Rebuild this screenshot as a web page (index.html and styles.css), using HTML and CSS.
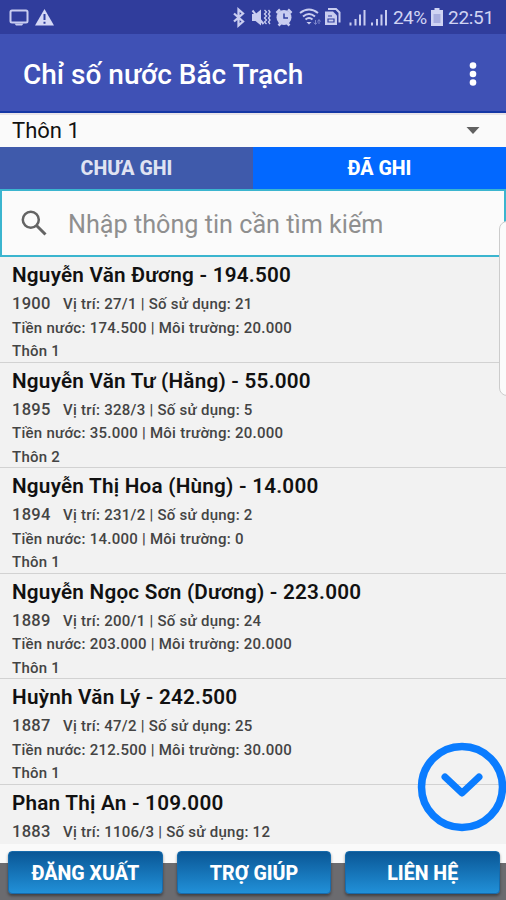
FILE: index.html
```html
<!DOCTYPE html>
<html lang="vi">
<head>
  <meta charset="UTF-8">
  <title>Chỉ số nước Bắc Trạch</title>
  <link rel="stylesheet" href="styles.css">
</head>
<body>
  <div class="status-bar">
    <svg class="status-left" width="48" height="34" viewBox="0 0 48 34" fill="none">
      <rect x="2.500" y="10.500" width="17" height="12" rx="1.500" stroke="#c9cdf0" stroke-width="2"/>
      <path d="M6.500 23.500h9l-1.500 2h-6z" fill="#c9cdf0"/>
      <path d="M36.500 9l9.500 16.500h-19z" fill="#d5d8f5"/>
      <path d="M36.500 14v6M36.500 21.800v2" stroke="#303f9f" stroke-width="2"/>
    </svg>
    <div class="status-right">
      <svg class="status-icons" width="157" height="34" viewBox="230 0 157 34" fill="none" stroke="#c9cdf0">
        <path d="M233 13.500l9 8-4.500 4v-16l4.500 4-9 8" stroke-width="2.300"/>
        <path d="M251 14h3.500l5.500-4.500v16l-5.500-4.500h-3.500z" fill="#c9cdf0" stroke="none"/>
        <path d="M251.500 10.500l11 13.500" stroke-width="2"/>
        <path d="M263.500 10l2 2-2 2 2 2-2 2 2 2-2 2 2 2M267.500 10l1.500 2-1.500 2 1.500 2-1.500 2 1.500 2-1.500 2 1.500 2" stroke-width="1.300"/>
        <circle cx="283" cy="17.500" r="7.500" fill="#c9cdf0" stroke="none"/>
        <path d="M275.500 13l3.500-3.500M290.500 13l-3.500-3.500M277.500 25.500l2-2M288.500 25.500l-2-2" stroke-width="2.500"/>
        <path d="M283 13.500v4.500h4" stroke="#303f9f" stroke-width="1.500"/>
        <path d="M299 13q9-7 18 0M302 16.500q6-5 12 0M304.500 19.500q3.500-3 7 0" stroke-width="2"/>
        <path d="M308 24.500l-2.500-2.500h5z" fill="#c9cdf0" stroke="none"/>
        <path d="M314.500 20v4M312.800 22.500l1.700 2 1.700-2M318 24v-4M316.500 21.500l1.500-2 1.500 2" stroke="#7d86cc" stroke-width="1"/>
        <path d="M324 11.500h8l4 4v9.500h-12z" fill="#c9cdf0" stroke="none"/>
        <path d="M327 9h8l3.500 3.500v10" stroke-width="2"/>
        <path d="M327 16h4M327 19h6v3h-6z" stroke="#303f9f" stroke-width="1.200"/>
        <path d="M349.500 25.500v-3M354.500 25.500v-6.500M359 25.500v-11M363.500 25.500v-15.500" stroke-width="2"/>
        <path d="M371 25.500v-3M376 25.500v-6.500M380.500 25.500v-11M385 25.500v-15.500" stroke-width="2"/>
      </svg>
      <span class="status-text percent">24%</span>
      <svg class="battery" width="12" height="18" viewBox="0 0 12 18">
        <path d="M3.500 0h5v2h3.500v16h-12v-16h3.500z" fill="#d0d4f3"/>
        <path d="M2.500 6h7v9h-7z" fill="#a8aedf"/>
      </svg>
      <span class="status-text clock">22:51</span>
    </div>
  </div>

  <header class="app-bar">
    <h1>Chỉ số nước Bắc Trạch</h1>
    <svg width="8" height="26" viewBox="0 0 8 26" fill="#fff">
      <circle cx="4" cy="4.500" r="3.300"/>
      <circle cx="4" cy="13" r="3.300"/>
      <circle cx="4" cy="21.500" r="3.300"/>
    </svg>
  </header>

  <div class="spinner">
    <span>Thôn 1</span>
    <svg width="14" height="7" viewBox="0 0 14 7"><path d="M0.500 0h13l-6.500 7z" fill="#616161"/></svg>
  </div>

  <div class="tabs">
    <div class="tab">CHƯA GHI</div>
    <div class="tab active">ĐÃ GHI</div>
  </div>

  <div class="search">
    <svg width="26" height="26" viewBox="0 0 26 26" fill="none" stroke="#646464">
      <circle cx="9.800" cy="9.800" r="8" stroke-width="2.500"/>
      <path d="M15.500 15.500l9 9" stroke-width="3"/>
    </svg>
    <span>Nhập thông tin cần tìm kiếm</span>
  </div>

  <main class="list">
    <div class="item">
      <h2>Nguyễn Văn Đương - 194.500</h2>
      <p><span class="code">1900</span>Vị trí: 27/1 | Số sử dụng: 21</p>
      <p>Tiền nước: 174.500 | Môi trường: 20.000</p>
      <p>Thôn 1</p>
    </div>
    <div class="item">
      <h2>Nguyễn Văn Tư (Hằng) - 55.000</h2>
      <p><span class="code">1895</span>Vị trí: 328/3 | Số sử dụng: 5</p>
      <p>Tiền nước: 35.000 | Môi trường: 20.000</p>
      <p>Thôn 2</p>
    </div>
    <div class="item">
      <h2>Nguyễn Thị Hoa (Hùng) - 14.000</h2>
      <p><span class="code">1894</span>Vị trí: 231/2 | Số sử dụng: 2</p>
      <p>Tiền nước: 14.000 | Môi trường: 0</p>
      <p>Thôn 1</p>
    </div>
    <div class="item">
      <h2>Nguyễn Ngọc Sơn (Dương) - 223.000</h2>
      <p><span class="code">1889</span>Vị trí: 200/1 | Số sử dụng: 24</p>
      <p>Tiền nước: 203.000 | Môi trường: 20.000</p>
      <p>Thôn 1</p>
    </div>
    <div class="item">
      <h2>Huỳnh Văn Lý - 242.500</h2>
      <p><span class="code">1887</span>Vị trí: 47/2 | Số sử dụng: 25</p>
      <p>Tiền nước: 212.500 | Môi trường: 30.000</p>
      <p>Thôn 1</p>
    </div>
    <div class="item">
      <h2>Phan Thị An - 109.000</h2>
      <p><span class="code">1883</span>Vị trí: 1106/3 | Số sử dụng: 12</p>
    </div>
  </main>

  <footer class="bottom-bar">
    <button>ĐĂNG XUẤT</button>
    <button>TRỢ GIÚP</button>
    <button>LIÊN HỆ</button>
  </footer>

  <div class="edge-panel"></div>

  <svg class="scroll-down" width="90" height="90" viewBox="0 0 90 90" fill="none" stroke="#0a7cff">
    <circle cx="45" cy="45" r="40.500" stroke-width="7.500"/>
    <path d="M28 35l17 16 17-16" stroke-width="7" stroke-linecap="round" stroke-linejoin="round"/>
  </svg>
</body>
</html>
```
FILE: styles.css
```css
* {
  box-sizing: border-box;
}

body {
  margin: 0;
  width: 506px;
  height: 900px;
  position: relative;
  overflow: hidden;
  display: flex;
  flex-direction: column;
  font-family: Roboto, sans-serif;
  background: #fafafa;
  color: #111;
  white-space: nowrap;
}

h1, h2, p {
  margin: 0;
}

.status-bar {
  height: 34px;
  flex: none;
  display: flex;
  justify-content: space-between;
  padding: 0 12px 0 8px;
  background: #303d9c;
}

.status-right {
  display: flex;
  align-items: center;
}

.status-text {
  color: #d0d4f3;
  font-size: 19px;
  line-height: 34px;
  padding-top: 2px;
}

.percent {
  width: 34px;
  margin: 0 4px 0 5px;
  letter-spacing: -0.6px;
}

.clock {
  width: 46px;
  margin-left: 5px;
  letter-spacing: -0.3px;
}

.app-bar {
  height: 79px;
  flex: none;
  display: flex;
  align-items: center;
  justify-content: space-between;
  padding: 2px 29px 0 23px;
  background: #3f51b5;
  border-bottom: 2px solid #1537a5;
  color: #fff;
}

.app-bar h1 {
  padding-top: 2px;
  font-size: 28px;
  font-weight: 500;
}

.spinner {
  height: 34px;
  flex: none;
  display: flex;
  align-items: center;
  justify-content: space-between;
  padding: 0 26px 2px 12px;
  border-top: 2px solid #e8e4e8;
  font-size: 22px;
}

.tabs {
  height: 42px;
  flex: none;
  display: flex;
}

.tab {
  flex: 1;
  line-height: 44px;
  text-align: center;
  font-size: 19.6px;
  font-weight: 800;
  background: #3f5aab;
  color: #dfe3f2;
}

.tab.active {
  background: #0268ff;
  color: #fff;
}

.search {
  height: 68px;
  flex: none;
  display: flex;
  align-items: center;
  gap: 21px;
  padding-left: 19px;
  border: 2px solid #3bb5cf;
  background: #fbfbfb;
  color: #8f8f8f;
  font-size: 25.2px;
}

.search span {
  padding-top: 2px;
}

.list {
  height: 587px;
  flex: none;
  overflow: hidden;
  background: #f2f2f2;
}

.item {
  height: 105.5px;
  padding: 4px 12px 0;
  border-bottom: 1px solid #d2d2d2;
}

.item h2 {
  font-size: 20.7px;
  font-weight: 600;
  letter-spacing: 0.23px;
  line-height: 29px;
  margin-bottom: 2px;
}

.item p {
  font-size: 15px;
  font-weight: 500;
  letter-spacing: 0.26px;
  line-height: 23.7px;
  color: #444;
}

.item .code {
  display: inline-block;
  width: 51px;
  font-size: 16.5px;
  letter-spacing: 0.3px;
}

.bottom-bar {
  flex: 1;
  display: flex;
  align-items: flex-start;
  gap: 14px;
  padding: 7px 6px 0 8px;
  background: linear-gradient(#fafafa 19px, #6b6b6f 19px);
}

.bottom-bar button {
  flex: 1;
  height: 43px;
  padding: 1px 0 0;
  border: 1px solid #176bac;
  border-radius: 4px;
  background: linear-gradient(#0a5796, #2190d8);
  box-shadow: 0 2px 3px rgba(0, 0, 0, 0.4);
  color: #fff;
  font-family: Roboto, sans-serif;
  font-size: 19.6px;
  font-weight: 800;
}

.edge-panel {
  position: absolute;
  top: 221px;
  right: -2px;
  width: 9px;
  height: 175px;
  border: 1px solid #ccc;
  border-radius: 8px 0 0 8px;
  background: #fbfbfb;
}

.scroll-down {
  position: absolute;
  left: 417px;
  top: 742px;
}
```
